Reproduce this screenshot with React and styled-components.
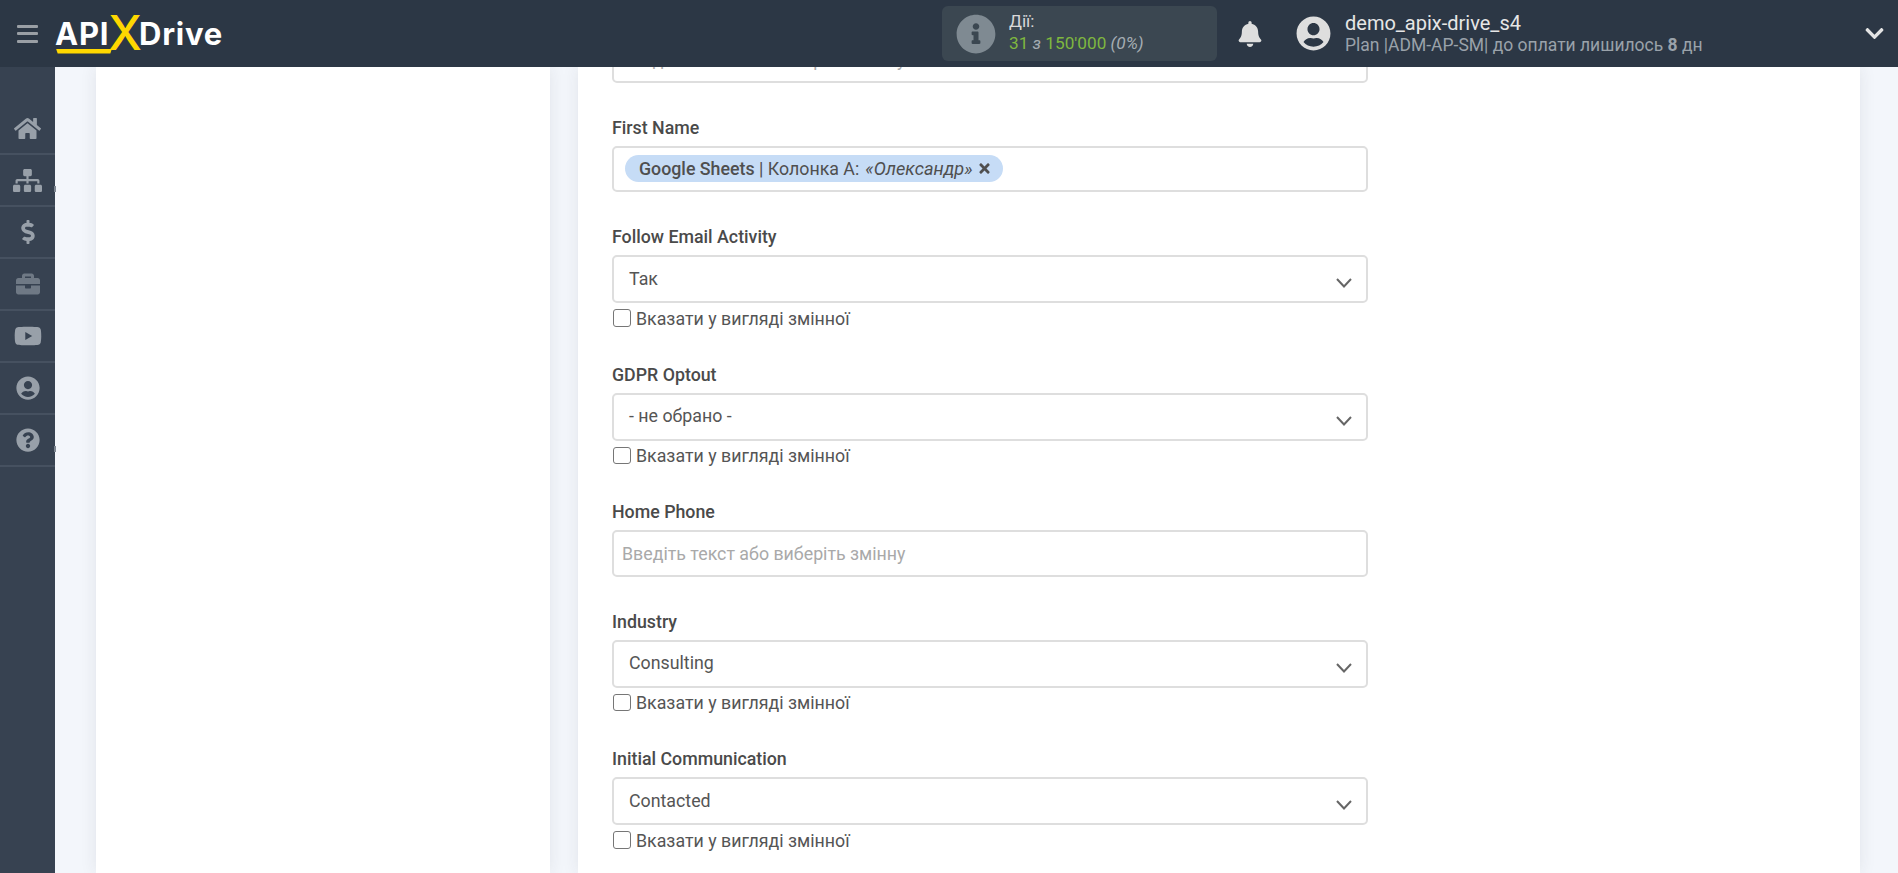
import React from "react";
import styled, { createGlobalStyle } from "styled-components";
import {
  FaHome, FaSitemap, FaDollarSign, FaBriefcase, FaYoutube, FaUserCircle,
  FaQuestionCircle, FaInfoCircle, FaBell, FaChevronDown, FaTimes,
} from "react-icons/fa";

const Global = createGlobalStyle`
  html, body { margin: 0; padding: 0; height: 100%; overflow: hidden; background: #f3f6fb; }
  * { box-sizing: border-box; }
  body { font-family: Roboto, "Noto Sans", sans-serif; color: #4f4f4f; }
`;

const Page = styled.div`display: flex; flex-direction: column; height: 873px; overflow: hidden;`;

const Header = styled.header`
  flex: 0 0 67px; display: flex; align-items: center; padding-left: 17px;
  background: #2c3745; position: relative; z-index: 2;
`;
const Burger = styled.div`
  width: 21px; height: 18px; display: flex; flex-direction: column; justify-content: space-between;
  span { display: block; height: 3px; background: #9a9fa5; border-radius: 1px; }
`;
const Logo = styled.div`
  margin-left: 17px; position: relative; width: 170px; height: 50px; display: flex; align-items: flex-start;
  font-family: Inter, sans-serif; font-weight: 700; font-size: 31px; color: #fff; line-height: 50px;
  letter-spacing: 0.8px;
`;
const LogoX = styled.span`
  color: #ffd800; font-size: 48px; font-weight: 500; line-height: 50px; margin: -1px -3px 0 -1px;
  letter-spacing: 0;
`;
const LogoBar = styled.span`
  position: absolute; left: 1px; top: 40px; width: 56px; height: 5px; background: #ffd800;
  clip-path: polygon(0 0, 100% 0, 97% 100%, 3% 100%);
`;

const Account = styled.div`
  margin-left: auto; width: 956px; padding-right: 13px; display: flex; align-items: center;
`;
const Info = styled.div`
  width: 275px; height: 55px; background: #3b4751; border-radius: 6px;
  display: flex; align-items: center; padding-left: 14px; gap: 13px;
  svg { font-size: 40px; color: #7f8a92; flex: none; }
`;
const InfoText = styled.div`line-height: 22px; font-size: 17.2px; color: #d8d8d8; margin-top: -3px;`;
const Green = styled.span`color: #7fb83f;`;
const Muted = styled.i`color: #a5adb3;`;

const Bell = styled(FaBell)`margin-left: 20px; font-size: 26px; color: #dedede; flex: none;`;
const Avatar = styled(FaUserCircle)`margin-left: 33px; font-size: 35px; color: #dedede; flex: none;`;
const User = styled.div`margin-left: 14px; display: flex; flex-direction: column;`;
const UserName = styled.div`font-size: 20px; line-height: 23px; color: #e6e6e6; margin-top: -1px;`;
const UserPlan = styled.div`font-size: 17.5px; line-height: 20px; color: #9aa2aa; b { font-weight: 700; }`;
const Caret = styled(FaChevronDown)`margin-left: auto; font-size: 21px; color: #e4e4e4;`;

const Body = styled.div`flex: 1; display: flex; min-height: 0;`;
const Sidebar = styled.nav`
  flex: 0 0 55px; background: #374251; padding-top: 36px; display: flex; flex-direction: column;
`;
const NavItem = styled.div`
  height: 52px; flex: none; border-bottom: 2px solid #465160; display: flex; align-items: center; justify-content: center;
  position: relative;
  svg { font-size: ${(p) => p.$size || 24}px; color: ${(p) => p.$dim ? "#6f7985" : "#98a0a9"}; }
  ${(p) => p.$tab && `&::after { content: ""; position: absolute; right: -1px; top: 31px; width: 2px; height: 6px; background: #7d8691; }`}
`;

const Main = styled.main`
  flex: 1; display: flex; gap: 28px; padding: 0 38px 0 41px; overflow: hidden; min-width: 0;
`;
const SidePanel = styled.section`
  flex: 0 0 454px; background: #fff; box-shadow: 0 0 16px rgba(40, 45, 60, 0.09);
`;
const FormPanel = styled.section`
  flex: 1; background: #fff; box-shadow: 0 0 16px rgba(40, 45, 60, 0.09); padding: 0 34px;
`;
const Form = styled.div`width: 756px; margin-top: -31px;`;

const Group = styled.div`margin-bottom: ${(p) => p.$gap}px;`;
const Label = styled.div`font-size: 17.8px; font-weight: 500; line-height: 20px; margin-bottom: 8px; color: #4a4a4a;`;
const Box = styled.div`
  height: ${(p) => p.$h || 46.5}px; border: 2px solid #dedede; border-radius: 5px; background: #fff;
  display: flex; align-items: center; position: relative; font-size: 17.8px; color: #555;
`;
const Placeholder = styled.span`padding-left: 8px; color: #a9a9a9;`;
const Value = styled.span`padding-left: 15px; margin-top: -2px;`;
const Chip = styled.span`
  margin-left: 11px; height: 27px; width: 378px; border-radius: 14px; background: #c6dcf6; display: flex; align-items: center;
  padding-left: 14px; font-size: 17.8px; white-space: nowrap; color: #4f4f4f;
  b { font-weight: 500; }
  i { margin-left: 6px; font-size: 18.2px; }
  svg { font-size: 15px; margin-left: 4px; }
`;
const Arrow = styled.svg`position: absolute; right: 14px; top: 21px; width: 16px; height: 10px;`;
const CheckRow = styled.label`
  display: flex; align-items: center; height: 18px; margin-top: 6px; font-size: 17.8px; color: #555; padding-left: 1px;
`;
const Check = styled.span`
  width: 17.5px; height: 17.5px; border: 1.5px solid #767676; border-radius: 3px; background: #fff; margin-right: 5.5px; flex: none;
`;

const nav = [
  [FaHome, 27], [FaSitemap, 29, false, true], [FaDollarSign, 24], [FaBriefcase, 24, true],
  [FaYoutube, 28], [FaUserCircle, 24], [FaQuestionCircle, 24, false, true],
];

const PH = "Введіть текст або виберіть змінну";

function Select({ label, value, last }) {
  return (
    <Group $gap={last ? 0 : 37.5}>
      <Label>{label}</Label>
      <Box $h={48}>
        <Value>{value}</Value>
        <Arrow viewBox="0 0 16 10"><polyline points="1,1 8,8.5 15,1" fill="none" stroke="#666" strokeWidth="2" /></Arrow>
      </Box>
      <CheckRow><Check />Вказати у вигляді змінної</CheckRow>
    </Group>
  );
}

export default function App() {
  return (
    <Page>
      <Global />
      <Header>
        <Burger><span /><span /><span /></Burger>
        <Logo>API<LogoX>X</LogoX>Drive<LogoBar /></Logo>
        <Account>
          <Info>
            <FaInfoCircle />
            <InfoText>
              Дії:<br />
              <Green>31</Green> <Muted>з</Muted> <Green>150'000</Green> <Muted>(0%)</Muted>
            </InfoText>
          </Info>
          <Bell />
          <Avatar />
          <User>
            <UserName>demo_apix-drive_s4</UserName>
            <UserPlan>Plan |ADM-AP-SM| до оплати лишилось <b>8</b> дн</UserPlan>
          </User>
          <Caret />
        </Account>
      </Header>
      <Body>
        <Sidebar>
          {nav.map(([Icon, size, dim, tab], i) => (
            <NavItem key={i} $size={size} $dim={dim} $tab={tab}><Icon /></NavItem>
          ))}
        </Sidebar>
        <Main>
          <SidePanel />
          <FormPanel>
            <Form>
              <Group $gap={35}>
                <Box><Placeholder>{PH}</Placeholder></Box>
              </Group>
              <Group $gap={35}>
                <Label>First Name</Label>
                <Box>
                  <Chip>
                    <b>Google Sheets</b>&nbsp;| Колонка А:<i>«Олександр»</i><FaTimes />
                  </Chip>
                </Box>
              </Group>
              <Select label="Follow Email Activity" value="Так" />
              <Select label="GDPR Optout" value="- не обрано -" />
              <Group $gap={35}>
                <Label>Home Phone</Label>
                <Box><Placeholder>{PH}</Placeholder></Box>
              </Group>
              <Select label="Industry" value="Consulting" />
              <Select label="Initial Communication" value="Contacted" last />
            </Form>
          </FormPanel>
        </Main>
      </Body>
    </Page>
  );
}
